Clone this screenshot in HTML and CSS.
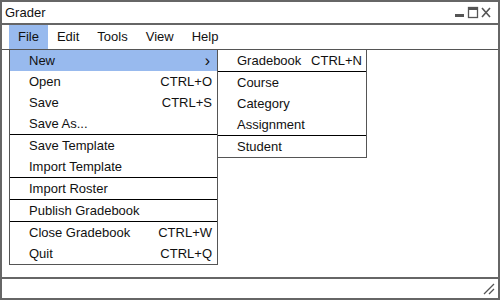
FILE: index.html
```html
<!DOCTYPE html>
<html lang="en">
<head>
    <meta charset="UTF-8">
    <title>Grader</title>
    <link rel="stylesheet" href="styles.css">
</head>
<body>

<div class="window">
    <div class="titlebar">
        <span class="title">Grader</span>
        <div class="controls">
            <svg width="40" height="14" viewBox="0 0 40 14">
                <rect x="2" y="8" width="9" height="3" fill="#555"/>
                <rect x="15.5" y="1.5" width="9" height="10" fill="none" stroke="#555" stroke-width="1.3"/>
                <rect x="15" y="1" width="10" height="3" fill="#555"/>
                <path d="M29 2 L37 11 M37 2 L29 11" stroke="#555" stroke-width="1.6"/>
            </svg>
        </div>
    </div>

    <div class="menubar">
        <span class="menu-item active">File</span>
        <span class="menu-item">Edit</span>
        <span class="menu-item">Tools</span>
        <span class="menu-item">View</span>
        <span class="menu-item">Help</span>
    </div>

    <div class="content">
        <div class="dropdown">
            <div class="group">
                <div class="row selected"><span>New</span><span class="arrow">&rsaquo;</span></div>
                <div class="row"><span>Open</span><span>CTRL+O</span></div>
                <div class="row"><span>Save</span><span>CTRL+S</span></div>
                <div class="row"><span>Save As...</span></div>
            </div>
            <div class="group">
                <div class="row"><span>Save Template</span></div>
                <div class="row"><span>Import Template</span></div>
            </div>
            <div class="group">
                <div class="row"><span>Import Roster</span></div>
            </div>
            <div class="group">
                <div class="row"><span>Publish Gradebook</span></div>
            </div>
            <div class="group">
                <div class="row"><span>Close Gradebook</span><span>CTRL+W</span></div>
                <div class="row"><span>Quit</span><span>CTRL+Q</span></div>
            </div>
        </div>

        <div class="dropdown submenu">
            <div class="group">
                <div class="row"><span>Gradebook</span><span>CTRL+N</span></div>
            </div>
            <div class="group">
                <div class="row"><span>Course</span></div>
                <div class="row"><span>Category</span></div>
                <div class="row"><span>Assignment</span></div>
            </div>
            <div class="group">
                <div class="row"><span>Student</span></div>
            </div>
        </div>
    </div>

    <div class="statusbar">
        <svg class="grip" width="12" height="12" viewBox="0 0 12 12">
            <path d="M1 11 L11 1 M6 11 L11 6" stroke="#555" stroke-width="1.3"/>
        </svg>
    </div>
</div>

</body>
</html>
```

FILE: styles.css
```css
body {
    margin: 0;
    font-family: "Liberation Sans", Arial, sans-serif;
    font-size: 13px;
    color: #111;
    background: #fff;
}
.window {
    width: 500px;
    height: 300px;
    box-sizing: border-box;
    border: 2px solid #666;
    display: flex;
    flex-direction: column;
}
.titlebar {
    height: 21px;
    flex-shrink: 0;
    border-bottom: 2px solid #666;
    display: flex;
    align-items: center;
    justify-content: space-between;
    padding: 0 5px 0 3px;
}
.controls svg {
    display: block;
    margin-top: 1px;
}
.menubar {
    height: 24px;
    flex-shrink: 0;
    border-bottom: 1px solid #555;
    display: flex;
    padding-left: 7px;
}
.menu-item {
    padding: 0 9px;
    line-height: 24px;
}
.menu-item.active {
    background: #98baee;
}
.content {
    flex: 1;
    position: relative;
}
.dropdown {
    position: absolute;
    top: -1px;
    left: 7px;
    width: 209px;
    box-sizing: border-box;
    border: 1px solid #555;
    background: #fff;
}
.submenu {
    left: 215px;
    width: 150px;
}
.group + .group {
    border-top: 1px solid #000;
}
.row {
    height: 21px;
    display: flex;
    align-items: center;
    justify-content: space-between;
    padding: 0 5px 0 19px;
}
.row.selected {
    background: #98baee;
}
.submenu .row {
    padding: 0 4px 0 19px;
}
.arrow {
    font-size: 16px;
    padding-right: 2px;
}
.statusbar {
    height: 16px;
    flex-shrink: 0;
    border-top: 2px solid #666;
    display: flex;
    justify-content: flex-end;
    align-items: flex-end;
    padding: 0 3px 3px 0;
}
.grip {
    display: block;
}
```
